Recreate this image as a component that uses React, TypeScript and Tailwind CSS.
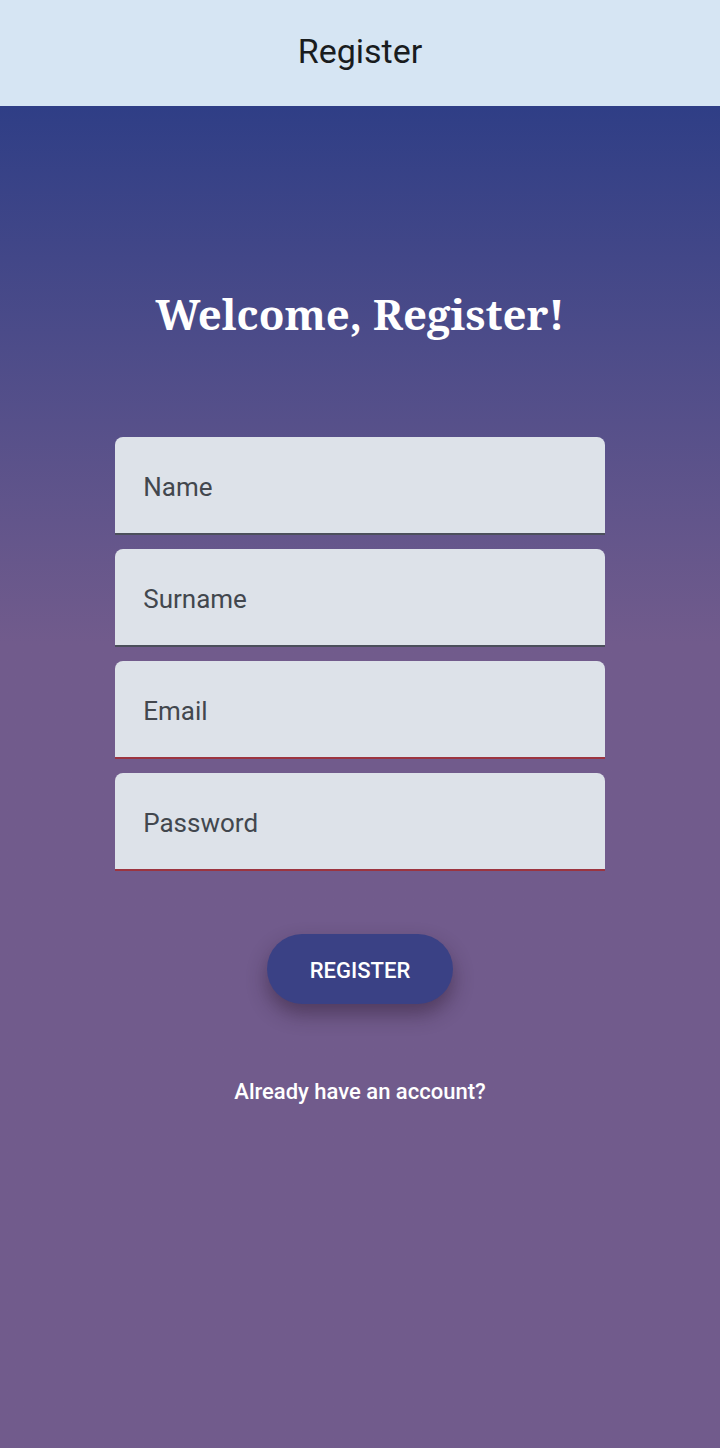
const fields = [
  { id: "name", label: "Name", type: "text", required: false },
  { id: "surname", label: "Surname", type: "text", required: false },
  { id: "email", label: "Email", type: "email", required: true },
  { id: "password", label: "Password", type: "password", required: true },
];

function Field({ id, label, type, required }: (typeof fields)[number]) {
  return (
    <div className="grid">
      <input
        id={id}
        type={type}
        placeholder=" "
        className={`peer col-start-1 row-start-1 h-[98px] w-full rounded-t-lg border-b-2 bg-[#dde2e9] px-7 pt-6 text-[26px] text-[#1c1b1f] outline-none ${
          required ? "border-[#9c3440]" : "border-[#4b4f5b]"
        }`}
      />
      <label
        htmlFor={id}
        className="pointer-events-none col-start-1 row-start-1 mx-7 mt-0.5 self-center text-[26px] leading-8 text-[#42474e] peer-focus:mt-2 peer-focus:self-start peer-focus:text-lg peer-[:not(:placeholder-shown)]:mt-2 peer-[:not(:placeholder-shown)]:self-start peer-[:not(:placeholder-shown)]:text-lg"
      >
        {label}
      </label>
    </div>
  );
}

export default function App() {
  return (
    <div className="flex min-h-screen flex-col bg-[#715b8c] font-[Roboto,sans-serif]">
      <header className="flex h-[106px] items-center justify-center bg-[#d6e5f3] pb-1">
        <h1 className="text-[34px] leading-10 text-[#191c1e]">Register</h1>
      </header>
      <main className="flex flex-1 flex-col items-center bg-linear-to-b from-[#2f3e86] to-[#715b8c] to-40% pt-[178px]">
        <h2 className="font-['Noto_Serif','Droid_Serif','DejaVu_Serif',serif] text-[42px] leading-[60px] font-bold text-white">
          Welcome, Register!
        </h2>
        <form className="mt-[93px] flex w-[68%] flex-col gap-[14px]" onSubmit={(e) => e.preventDefault()}>
          {fields.map((f) => (
            <Field key={f.id} {...f} />
          ))}
          <button
            type="submit"
            className="mt-[49px] h-[70px] self-center rounded-full bg-[#3a4185] px-[43px] pt-0.5 text-[22px] font-medium text-white shadow-[0_10px_20px_rgba(40,20,40,0.45)]"
          >
            REGISTER
          </button>
        </form>
        <a href="#login" className="mt-[72px] text-[22px] leading-8 font-medium text-white">
          Already have an account?
        </a>
      </main>
    </div>
  );
}
